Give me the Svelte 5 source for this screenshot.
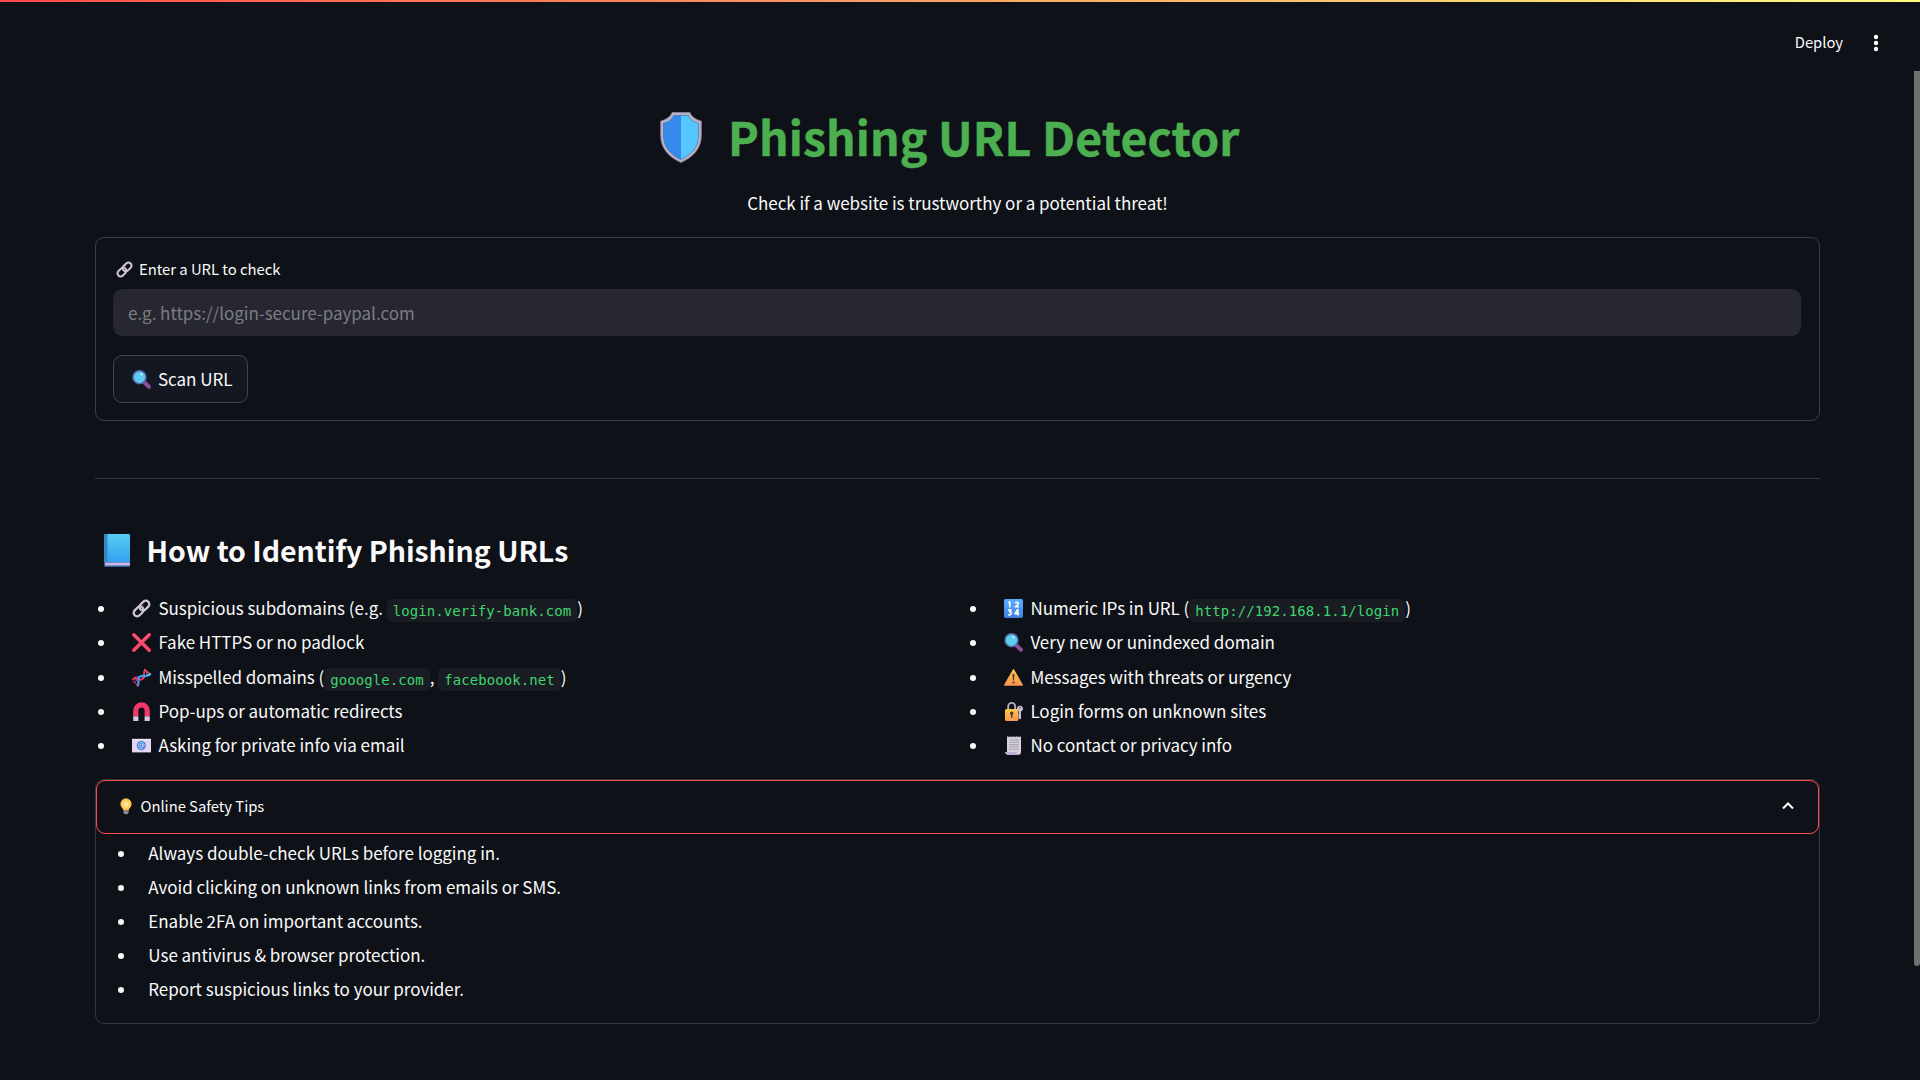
<script>
  const left = [
    { icon: 'link', parts: ['Suspicious subdomains (e.g. ', { code: 'login.verify-bank.com' }, ')'] },
    { icon: 'cross', parts: ['Fake HTTPS or no padlock'] },
    { icon: 'dna', parts: ['Misspelled domains (', { code: 'gooogle.com' }, ', ', { code: 'faceboook.net' }, ')'] },
    { icon: 'magnet', parts: ['Pop-ups or automatic redirects'] },
    { icon: 'mail', parts: ['Asking for private info via email'] },
  ];
  const right = [
    { icon: 'numbers', parts: ['Numeric IPs in URL (', { code: 'http://192.168.1.1/login' }, ')'] },
    { icon: 'search', parts: ['Very new or unindexed domain'] },
    { icon: 'warning', parts: ['Messages with threats or urgency'] },
    { icon: 'lock', parts: ['Login forms on unknown sites'] },
    { icon: 'scroll', parts: ['No contact or privacy info'] },
  ];
  const tips = [
    'Always double-check URLs before logging in.',
    'Avoid clicking on unknown links from emails or SMS.',
    'Enable 2FA on important accounts.',
    'Use antivirus & browser protection.',
    'Report suspicious links to your provider.',
  ];
</script>

{#snippet icon(name)}
  <svg class="icon {name}" viewBox="0 0 19 19" aria-hidden="true">
    {#if name === 'link'}
      <g fill="none" stroke="#cfc5d6" stroke-width="2.3">
        <rect x="-5.5" y="-3.5" width="11" height="7" rx="3.5" transform="translate(12.400 6.600) rotate(-45)" />
        <rect x="-5.5" y="-3.5" width="11" height="7" rx="3.5" transform="translate(6.600 12.400) rotate(-45)" />
      </g>
      <path d="M8.2 9.2l3-3" stroke="#9d91aa" stroke-width=".8" />
    {:else if name === 'cross'}
      <path d="M1.8 1.8l15.4 15.4M17.2 1.8L1.8 17.2" stroke="#f8456c" stroke-width="3.6" stroke-linecap="round" />
      <path d="M2 1.6l7.5 7.3 7.3-7.3" fill="none" stroke="#ff6b8c" stroke-width="1" stroke-linecap="round" />
    {:else if name === 'dna'}
      <path d="M4 8.3v5M6 8v7M12.5 3v7M14.8 3.2v4.5M8 7l4 4" stroke="#a57ad6" stroke-width="1" />
      <path d="M.8 12.2c2.2-6 6.2 2.6 10.2-1.5 2.2-2.2-.2-7 2.5-9.4" fill="none" stroke="#ef3564" stroke-width="1.9" />
      <path d="M5.2 18.2c3.2-2.2-.3-6.5 2.2-9.2 3.5-3.7 7.8 2.2 11-3.2" fill="none" stroke="#3fa3f5" stroke-width="1.9" />
      <path d="M12.3 1.7c2.3 1 3.5 2.8 6 4" fill="none" stroke="#ef5479" stroke-width="1.3" />
      <path d="M1 13.3c1.5.7 3 2 4.5 4.400" fill="none" stroke="#ef3564" stroke-width="1.1" />
      <path d="M15 7.2c1.7.2 2.8-.3 3.6-1.8" fill="none" stroke="#58d4f5" stroke-width="1.7" />
    {:else if name === 'magnet'}
      <path d="M3.8 14.3V8.8a5.7 5.7 0 0 1 11.4 0v5.500" fill="none" stroke="#f23868" stroke-width="5.2" transform="translate(0 -.2)" />
      <path d="M1.2 14.2h5.2V19H1.2zM12.6 14.2h5.2V19h-5.2z" fill="#d3c9dc" />
    {:else if name === 'mail'}
      <path d="M0 2.8h19v13.6H0z" fill="#e3d6ee" />
      <path d="M0 3h19v1H0z" fill="#eee6f5" />
      <circle cx="9.3" cy="9.6" r="4.6" fill="#3c7fda" />
      <circle cx="9.3" cy="9.6" r="1.5" fill="none" stroke="#c8dcf8" />
      <path d="M11 8v2.2q1 1.2 1.4-.6a3.1 3.1 0 1 0-1.5 2.6" fill="none" stroke="#c8dcf8" stroke-width=".8" />
    {:else if name === 'numbers'}
      <rect width="19" height="19" rx="1.8" fill="url(#g-blue)" />
      <g fill="none" stroke="#fff" stroke-width="1.5" stroke-linejoin="round">
        <path d="M4.2 3.8L5.8 2.8V8.4M11.2 4q1.8-1.7 3 0 .7 1.2-2.9 3.8h3.6" />
        <path d="M4 11h3.1L5.6 12.9q2 .2 1.5 2-.9 1.7-3.1.7M13.8 16.5v-6l-2.9 4.2h4.3" />
      </g>
    {:else if name === 'search'}
      <path d="M12 12l4.9 4.8" stroke="#8c4e9c" stroke-width="4" stroke-linecap="round" />
      <circle cx="7.5" cy="7.2" r="6.5" fill="#5dcaf0" stroke="#4c6ba8" stroke-width="1.5" />
      <circle cx="9.4" cy="4.4" r="1.1" fill="#c4f3ff" />
    {:else if name === 'warning'}
      <path d="M9.5 1.8L18.3 17H.7z" fill="url(#g-gold)" stroke="url(#g-gold)" stroke-width="1.4" stroke-linejoin="round" />
      <path d="M8.4 6.2q1.1-1 2.2 0L10 12.5H9z" fill="#4b3a52" />
      <circle cx="9.5" cy="14.6" r="1.1" fill="#4b3a52" />
    {:else if name === 'lock'}
      <path d="M4.2 8V4.4a3.5 3.5 0 0 1 7 0V8" fill="none" stroke="#b5aebf" stroke-width="1.9" />
      <rect x="1" y="7" width="13.4" height="12" rx="1.5" fill="url(#g-gold)" />
      <circle cx="7.7" cy="11.2" r="1.7" fill="#47305c" />
      <path d="M7 12h1.4v3.8H7z" fill="#47305c" />
      <circle cx="16" cy="6.6" r="2.9" fill="#c9bfd4" />
      <circle cx="16" cy="5.8" r=".8" fill="#57505f" />
      <path d="M15 8.5h2v8l-1 1-1-1-.8-1 .8-1-.8-1 .8-1z" fill="#c9bfd4" />
    {:else if name === 'scroll'}
      <path d="M3 1h14v15.2q0 2.5-2.4 2.5H3.8Q1.4 18.5 1.2 16H3z" fill="#d8d1df" />
      <path d="M1.2 16h11.6q.3 2.7 2.2 2.7H3.8Q1.4 18.5 1.2 16z" fill="#bfb2d2" />
      <path d="M3 .8h14" stroke="#b3abbb" stroke-width="1.2" stroke-dasharray="1 .8" />
      <path d="M5 4h10M5 6.3h10M5 8.6h10M5 10.9h10M5 13.2h10" stroke="#9f98a9" stroke-width=".9" />
    {/if}
  </svg>
{/snippet}

{#snippet column(items)}
  <ul class="signs">
    {#each items as item}
      <li>
        <i class="dot"></i>
        {@render icon(item.icon)}
        <span class="line">{#each item.parts as part}{#if part.code}<code>{part.code}</code>{:else}{part}{/if}{/each}</span>
      </li>
    {/each}
  </ul>
{/snippet}

<svg class="defs" aria-hidden="true">
  <defs>
    <linearGradient id="g-blue" x1="0" y1="0" x2="0" y2="1"><stop offset="0" stop-color="#5aaeff" /><stop offset="1" stop-color="#3f7fe0" /></linearGradient>
    <linearGradient id="g-gold" x1="0" y1="0" x2="0" y2="1"><stop offset="0" stop-color="#ffc83d" /><stop offset="1" stop-color="#fb9650" /></linearGradient>
    <linearGradient id="g-book" x1="0" y1="0" x2="0" y2="1"><stop offset="0" stop-color="#54cdf4" /><stop offset="1" stop-color="#36a1ef" /></linearGradient>
    <radialGradient id="g-bulb"><stop offset="0" stop-color="#fff0b0" /><stop offset="1" stop-color="#ffb936" /></radialGradient>
  </defs>
</svg>

<div class="page">
  <div class="rainbow"></div>
  <header>
    <span class="deploy">Deploy</span>
    <svg class="dots" viewBox="0 0 6 18"><g fill="#fafafa"><circle cx="3" cy="3" r="2.2" /><circle cx="3" cy="9" r="2.2" /><circle cx="3" cy="15" r="2.2" /></g></svg>
  </header>
  <div class="scrollbar"></div>

  <main>
    <h1>
      <svg class="shield" viewBox="0 0 42 51">
        <path d="M12 .5h18c1 3.500 4.500 6.500 11.300 8.700v14.300c0 12-7 21-20.300 27C7.700 44.500.7 35.500.7 23.500V9.200C7.500 7 11 4 12 .5z" fill="#b9b2c2" stroke="#908799" stroke-width=".8" />
        <path d="M21 3.500h-7.300C12 7.500 9 9.800 3.500 11.400v12.100C3.500 34 9.500 42 21 47.600z" fill="#3889ec" />
        <path d="M21 3.500h7.300c1.700 4 4.700 6.300 10.200 7.900v12.100C38.500 34 32.500 42 21 47.600z" fill="#55c7ff" />
        <path d="M13.700 3.500h14.600c1.700 4 4.700 6.300 10.200 7.900v12.100C38.500 34 32.500 42 21 47.600 9.500 42 3.500 34 3.500 23.500V11.400C9 9.800 12 7.500 13.700 3.500z" fill="none" stroke="#2869b5" stroke-width=".8" opacity=".7" />
      </svg>
      <span>Phishing URL Detector</span>
    </h1>
    <p class="subtitle"><span>Check if a website is trustworthy or a potential threat!</span></p>

    <form onsubmit={(e) => e.preventDefault()}>
      <label for="url">{@render icon('link')}<span>Enter a URL to check</span></label>
      <input id="url" placeholder="e.g. https://login-secure-paypal.com" />
      <button>{@render icon('search')}<span>Scan URL</span></button>
    </form>

    <hr />

    <h2>
      <svg class="book" viewBox="0 0 26 33">
        <rect width="26" height="33" rx="1.500" fill="#31609f" />
        <rect x="1" y="28.500" width="25" height="3" fill="#c7b7e6" />
        <path d="M1.500 0H24.500Q26 0 26 1.500V28H0V1.500Q0 0 1.500 0z" fill="url(#g-book)" />
        <path d="M0 1.500Q0 0 1.500 0H3.500V28H0z" fill="#3489c4" />
      </svg>
      <span>How to Identify Phishing URLs</span>
    </h2>

    <div class="columns">
      {@render column(left)}
      {@render column(right)}
    </div>

    <section class="expander">
      <div class="summary">
        <svg class="bulb" viewBox="0 0 12 17">
          <path d="M3.500 11h5v4q-2.500 2.500-5 0z" fill="#9a8da3" />
          <path d="M3.500 13h5" stroke="#5d5168" />
          <path d="M6 .3a5.600 5.600 0 0 1 5.600 5.600c0 3-2.600 4-2.900 6.400H3.300C3 9.900.4 8.900.4 5.900A5.600 5.600 0 0 1 6 .3z" fill="url(#g-bulb)" />
        </svg>
        <span>Online Safety Tips</span>
        <svg class="chevron" viewBox="0 0 12 8"><path d="M1 6.500L6 1.500l5 5" fill="none" stroke="#fafafa" stroke-width="2" /></svg>
      </div>
      <ul class="tips">
        {#each tips as tip}
          <li><i class="dot"></i><span>{tip}</span></li>
        {/each}
      </ul>
    </section>
  </main>
</div>

<style>
  :global(body) { background: #0e1117; }
  * { box-sizing: border-box; }
  .page {
    position: relative;
    width: 1920px;
    height: 1080px;
    overflow: hidden;
    background: #0e1117;
    color: #fafafa;
    font: 17px/34px 'Noto Sans CJK JP', 'Noto Sans', sans-serif;
    letter-spacing: -0.03px;
  }
  .defs { position: absolute; width: 0; height: 0; }
  span { white-space: pre; }
  .rainbow { height: 2px; background: linear-gradient(90deg, #ff4b4b, #fffd80); }
  header {
    display: flex;
    justify-content: flex-end;
    align-items: center;
    gap: 30px;
    height: 82px;
    padding-right: 41px;
    font-size: 14.800px;
  }
  .deploy { padding-bottom: 2px; }
  .dots { width: 6px; height: 18px; }
  .scrollbar {
    position: absolute;
    right: 0;
    top: 71px;
    width: 6px;
    height: 895px;
    background: #6f7072;
    border-radius: 0 0 3px 3px;
  }
  main { width: 1725px; margin-left: 95px; }
  h1 {
    display: flex;
    align-items: center;
    height: 105px;
    margin: 0;
    padding-left: 565px;
    font-size: 46.300px;
    letter-spacing: 0.120px;
    color: #4caf50;
    -webkit-text-stroke: 0.500px #4caf50;
  }
  h1 span { padding-bottom: 1px; }
  .shield { width: 42px; height: 51px; margin: 1px 26px 0 0; overflow: visible; }
  .subtitle { display: flex; justify-content: center; margin: 0; height: 48px; line-height: 27px; }
  form {
    display: flex;
    flex-direction: column;
    align-items: flex-start;
    height: 184px;
    padding: 17px 17px;
    border: 1px solid #3c3f44;
    border-radius: 9px;
  }
  .icon { flex: none; width: 19px; height: 19px; overflow: visible; }
  label { display: flex; align-items: center; gap: 6px; height: 28px; margin: 0 0 6px 3px; font-size: 14.850px; }
  label .icon { width: 17px; height: 17px; }
  input {
    flex: none;
    width: 1688px;
    height: 47px;
    padding: 0 15px 1px;
    border: 0;
    border-radius: 9px;
    background: #262730;
    color: #fafafa;
    font: inherit;
    letter-spacing: inherit;
  }
  input::placeholder { color: #7d7d83; opacity: 1; }
  button {
    display: flex;
    align-items: center;
    gap: 7px;
    width: 135px;
    height: 48px;
    margin-top: 19px;
    padding: 0 0 0 18px;
    border: 1px solid #414449;
    border-radius: 9px;
    background: #131720;
    color: #fafafa;
    font: inherit;
    letter-spacing: inherit;
  }
  button span { padding-bottom: 1px; }
  hr { height: 1px; margin: 57px 0 0; border: 0; background: #34373b; }
  h2 { display: flex; align-items: center; gap: 16.500px; height: 60px; margin: 41px 0 0; padding-left: 9px; font-size: 28.500px; font-weight: 600; }
  h2 span { padding-bottom: 1px; }
  .book { width: 26px; height: 33px; }
  .columns { display: grid; grid-template-columns: 872px 853px; margin-top: 12px; }
  ul { margin: 0; padding: 0; list-style: none; }
  li { display: flex; align-items: center; height: 34px; }
  li span { padding-bottom: 2px; }
  .dot { flex: none; width: 6px; height: 6px; border-radius: 50%; background: #fafafa; }
  .signs li { padding-left: 3px; }
  .signs li:nth-child(2) { margin-bottom: 1px; }
  .signs .icon { margin: 0 7.400px 1px 28px; }
  code {
    padding: 4px 6px 2.500px;
    border-radius: 5px;
    background: #1a1c24;
    color: #3dd56d;
    font: 14px/14px 'DejaVu Sans Mono', 'Liberation Mono', monospace;
    letter-spacing: 0.070px;
    vertical-align: -1px;
  }
  .expander { height: 245px; margin-top: 16px; border: 1px solid #34373b; border-radius: 9px; }
  .summary { display: flex; align-items: center; height: 54px; padding: 0 24px 0 23px; border: 1px solid #ff4b4b; border-radius: 9px; font-size: 14.800px; }
  .summary span { padding-bottom: 3px; }
  .bulb { width: 12px; height: 17px; margin: 0 8.500px 2px 0; }
  .chevron { width: 12px; height: 8px; margin: 0 0 2px auto; }
  .tips { padding: 3px 0 0 22px; }
  .tips .dot { margin-right: 24.300px; }
</style>
